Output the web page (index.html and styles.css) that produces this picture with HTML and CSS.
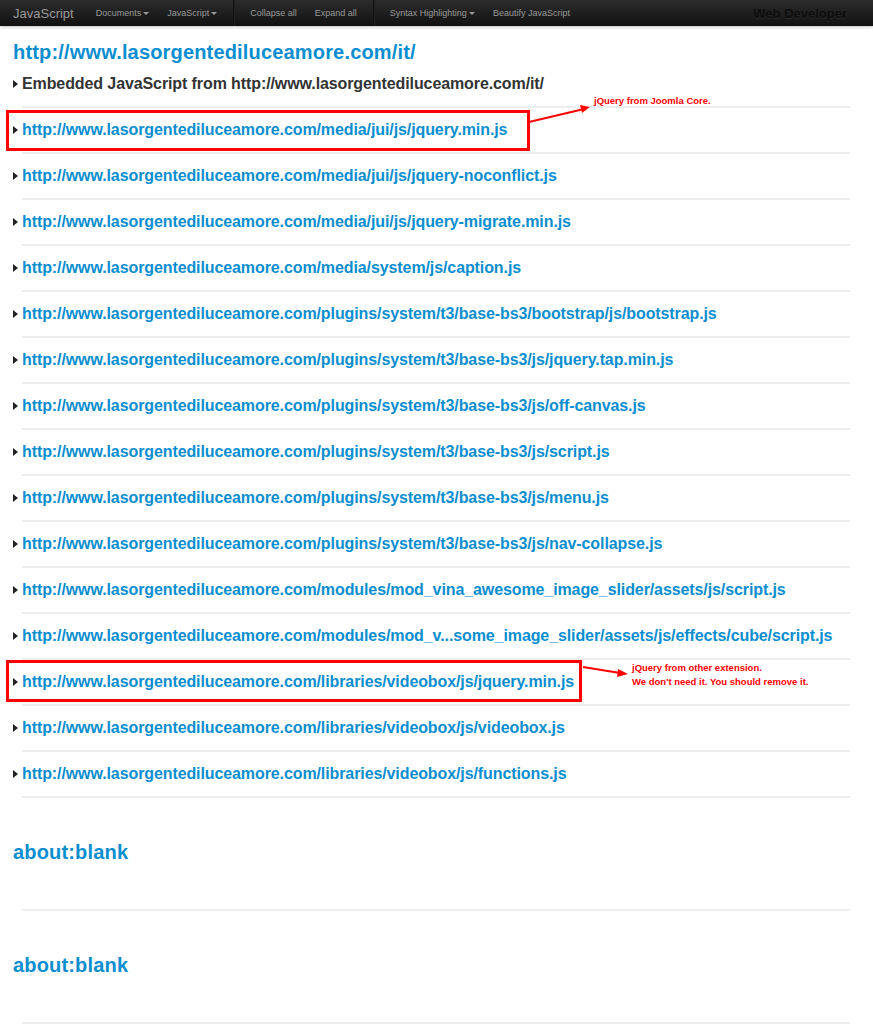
FILE: index.html
```html
<!DOCTYPE html>
<html lang="en">
<head>
    <meta charset="UTF-8">
    <meta name="viewport" content="width=device-width, initial-scale=1.0">
    <title>JavaScript - Web Developer</title>
    <link rel="stylesheet" href="styles.css">
</head>
<body>
    <div class="navbar">
        <span class="brand">JavaScript</span>
        <span class="navItem">Documents<b class="caret"></b></span>
        <span class="navItem">JavaScript<b class="caret"></b></span>
        <span class="divider"></span>
        <span class="navItem">Collapse all</span>
        <span class="navItem">Expand all</span>
        <span class="divider"></span>
        <span class="navItem">Syntax Highlighting<b class="caret"></b></span>
        <span class="navItem">Beautify JavaScript</span>
        <span class="webDev">Web Developer</span>
    </div>

    <div class="content">
        <div class="site first">
            <h2>http://www.lasorgentediluceamore.com/it/</h2>
            <div class="scripts">
                <div class="row embedded"><span class="arrow"></span>Embedded JavaScript from http://www.lasorgentediluceamore.com/it/</div>
                <div class="row"><span class="arrow"></span>http://www.lasorgentediluceamore.com/media/jui/js/jquery.min.js
                    <!-- note pointing at the core jquery -->
                    <div class="mark markCore"></div>
                    <svg class="pointer pointerCore" width="70" height="30" viewBox="0 0 70 30"><line x1="1" y1="23" x2="56" y2="10" stroke="#f00" stroke-width="2"/><polygon points="62,8 52,6 54,14" fill="#f00"/></svg>
                    <div class="note noteCore">jQuery from Joomla Core.</div>
                </div>
                <div class="row"><span class="arrow"></span>http://www.lasorgentediluceamore.com/media/jui/js/jquery-noconflict.js</div>
                <div class="row"><span class="arrow"></span>http://www.lasorgentediluceamore.com/media/jui/js/jquery-migrate.min.js</div>
                <div class="row"><span class="arrow"></span>http://www.lasorgentediluceamore.com/media/system/js/caption.js</div>
                <div class="row"><span class="arrow"></span>http://www.lasorgentediluceamore.com/plugins/system/t3/base-bs3/bootstrap/js/bootstrap.js</div>
                <div class="row"><span class="arrow"></span>http://www.lasorgentediluceamore.com/plugins/system/t3/base-bs3/js/jquery.tap.min.js</div>
                <div class="row"><span class="arrow"></span>http://www.lasorgentediluceamore.com/plugins/system/t3/base-bs3/js/off-canvas.js</div>
                <div class="row"><span class="arrow"></span>http://www.lasorgentediluceamore.com/plugins/system/t3/base-bs3/js/script.js</div>
                <div class="row"><span class="arrow"></span>http://www.lasorgentediluceamore.com/plugins/system/t3/base-bs3/js/menu.js</div>
                <div class="row"><span class="arrow"></span>http://www.lasorgentediluceamore.com/plugins/system/t3/base-bs3/js/nav-collapse.js</div>
                <div class="row"><span class="arrow"></span>http://www.lasorgentediluceamore.com/modules/mod_vina_awesome_image_slider/assets/js/script.js</div>
                <div class="row"><span class="arrow"></span>http://www.lasorgentediluceamore.com/modules/mod_v...some_image_slider/assets/js/effects/cube/script.js</div>
                <div class="row"><span class="arrow"></span>http://www.lasorgentediluceamore.com/libraries/videobox/js/jquery.min.js
                    <div class="mark markOther"></div>
                    <svg class="pointer pointerOther" width="50" height="16" viewBox="0 0 50 16"><line x1="1" y1="2" x2="38" y2="8" stroke="#f00" stroke-width="2"/><polygon points="46,9 36,4 35,12" fill="#f00"/></svg>
                    <div class="note noteOther">jQuery from other extension.<br>We don't need it. You should remove it.</div>
                </div>
                <div class="row"><span class="arrow"></span>http://www.lasorgentediluceamore.com/libraries/videobox/js/videobox.js</div>
                <div class="row"><span class="arrow"></span>http://www.lasorgentediluceamore.com/libraries/videobox/js/functions.js</div>
            </div>
        </div>

        <div class="site">
            <h2>about:blank</h2>
            <div class="scripts empty"></div>
        </div>

        <div class="site">
            <h2>about:blank</h2>
            <div class="scripts empty"></div>
        </div>
    </div>
</body>
</html>
```

FILE: styles.css
```css
body {
    margin: 0;
    font-family: "Liberation Sans", Arial, sans-serif;
    background-color: #fff;
    color: #333;
}

.navbar {
    height: 26px;
    display: flex;
    align-items: center;
    background: linear-gradient(#2c2c2c, #111);
    box-shadow: 0 1px 3px rgba(0, 0, 0, 0.25);
    font-size: 9px;
    color: #999;
    white-space: nowrap;
}
.brand {
    font-size: 13px;
    color: #999;
    margin-left: 13px;
    margin-right: 13px;
}
.navItem {
    padding: 0 9px;
}
.caret {
    display: inline-block;
    margin-left: 2px;
    vertical-align: middle;
    border-top: 3px solid #999;
    border-left: 3px solid transparent;
    border-right: 3px solid transparent;
}
.divider {
    align-self: stretch;
    width: 1px;
    margin: 0 6px 0 7px;
    background-color: #111;
    border-right: 1px solid #222;
}
.webDev {
    margin-left: auto;
    margin-right: 26px;
    font-size: 13px;
    font-weight: bold;
    color: #0d0d0d;
    text-shadow: 0 1px 0 #2a2a2a;
}

.content {
    padding-left: 13px;
    width: 837px;
}
.site {
    padding-top: 44px;
}
.site.first {
    padding-top: 16px;
}
h2 {
    margin: 0;
    font-size: 20px;
    line-height: 20px;
    color: #0a8ed0;
    letter-spacing: 0.17px;
}
.scripts {
    margin-left: 9px;
}
.scripts.empty {
    height: 47px;
    border-bottom: 2px solid #eee;
}
.row {
    position: relative;
    padding: 11px 0;
    height: 22px;
    line-height: 22px;
    font-size: 16px;
    font-weight: bold;
    color: #0a8ed0;
    border-bottom: 2px solid #eee;
    letter-spacing: -0.1px;
}
.row.embedded {
    color: #333;
}
.arrow {
    position: absolute;
    left: -9px;
    top: 18px;
    border-left: 5px solid #222;
    border-top: 4px solid transparent;
    border-bottom: 4px solid transparent;
}

/* red markup drawn over the list */
.mark {
    position: absolute;
    border: 3px solid #f00;
    left: -16px;
}
.markCore {
    top: 2px;
    width: 518px;
    height: 35px;
}
.markOther {
    top: 0px;
    width: 570px;
    height: 36px;
}
.pointer {
    position: absolute;
}
.pointerCore {
    left: 506px;
    top: -9px;
}
.pointerOther {
    left: 560px;
    top: 5px;
}
.note {
    position: absolute;
    font-size: 9.5px;
    line-height: 14px;
    color: #f00;
    letter-spacing: 0;
    white-space: nowrap;
}
.noteCore {
    left: 572px;
    top: -14px;
}
.noteOther {
    left: 610px;
    top: 1px;
}
```
